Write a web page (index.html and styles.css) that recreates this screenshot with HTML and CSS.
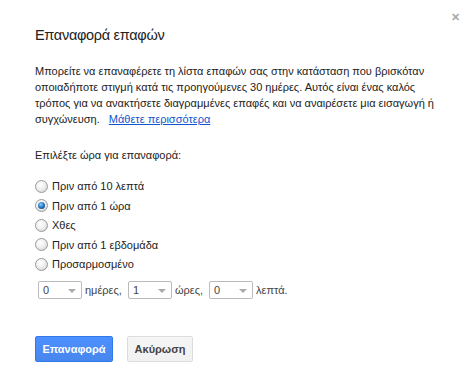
FILE: index.html
```html
<!DOCTYPE html>
<html lang="el">
<head>
  <meta charset="UTF-8" />
  <title>Επαναφορά επαφών</title>
  <link rel="stylesheet" href="styles.css">
</head>
<body>

  <div class="dialog">
    <div class="close">&#x2715;</div>

    <h2>Επαναφορά επαφών</h2>

    <p class="intro">
      Μπορείτε να επαναφέρετε τη λίστα επαφών σας στην κατάσταση που βρισκόταν
      οποιαδήποτε στιγμή κατά τις προηγούμενες 30 ημέρες. Αυτός είναι ένας καλός
      τρόπος για να ανακτήσετε διαγραμμένες επαφές και να αναιρέσετε μια εισαγωγή ή
      συγχώνευση. <a href="#">Μάθετε περισσότερα</a>
    </p>

    <p class="pick">Επιλέξτε ώρα για επαναφορά:</p>

    <div class="options">
      <label><input type="radio" name="when" /> Πριν από 10 λεπτά</label>
      <label><input type="radio" name="when" checked /> Πριν από 1 ώρα</label>
      <label><input type="radio" name="when" /> Χθες</label>
      <label><input type="radio" name="when" /> Πριν από 1 εβδομάδα</label>
      <label><input type="radio" name="when" /> Προσαρμοσμένο</label>
    </div>

    <div class="custom">
      <span class="select"><select><option>0</option></select></span>
      <span class="unit">ημέρες,</span>
      <span class="select"><select><option>1</option></select></span>
      <span class="unit">ώρες,</span>
      <span class="select"><select><option>0</option></select></span>
      <span class="unit">λεπτά.</span>
    </div>

    <div class="buttons">
      <button class="btn primary">Επαναφορά</button>
      <button class="btn">Ακύρωση</button>
    </div>
  </div>

</body>
</html>
```

FILE: styles.css
```css
body {
  margin: 0;
  font-family: "Liberation Sans", Arial, sans-serif;
  font-size: 11px;
  color: #222;
  background: #fff;
}

.dialog {
  position: relative;
  padding: 24px 35px 20px 35px;
}

.close {
  position: absolute;
  top: 11px;
  right: 13px;
  font-size: 11px;
  font-weight: bold;
  color: #aaa;
}

h2 {
  margin: 0;
  font-size: 14.5px;
  letter-spacing: -0.3px;
  font-weight: normal;
  line-height: 22px;
}

.intro {
  margin: 17px 0 0;
  line-height: 16px;
  width: 400px;
}

.intro a {
  color: #15c;
  margin-left: 6px;
}

.pick {
  margin: 20px 0 0;
  line-height: 16px;
}

.options {
  margin-top: 16px;
  display: flex;
  flex-direction: column;
  gap: 5.5px;
}

.options label {
  display: flex;
  align-items: center;
  gap: 4px;
  height: 14px;
  font-size: 11px;
}

.options input {
  appearance: none;
  margin: 0;
  width: 13px;
  height: 13px;
  border-radius: 50%;
  border: 1px solid #9a9a9a;
  background: radial-gradient(circle at 40% 35%, #fff 0%, #f0f0f0 45%, #c8c8c8 100%);
  box-sizing: border-box;
  position: relative;
}

.options input:checked::after {
  content: "";
  position: absolute;
  left: 2px;
  top: 2px;
  width: 7px;
  height: 7px;
  border-radius: 50%;
  background: radial-gradient(circle at 40% 35%, #8fd0ff 0%, #2b7cc4 45%, #0c3d73 100%);
}

.custom {
  margin-top: 10px;
  padding-left: 3px;
  display: flex;
  align-items: center;
  gap: 3px;
}

.unit {
  color: #444;
  margin-right: 3px;
}

.select {
  position: relative;
  display: inline-block;
}

.select select {
  appearance: none;
  display: block;
  width: 44px;
  height: 18px;
  padding: 0 0 0 4px;
  border: 1px solid #bbb;
  border-radius: 2px;
  background: #fff;
  font-family: inherit;
  font-size: 11px;
  color: #444;
}

.select::after {
  content: "";
  position: absolute;
  right: 6px;
  top: 8px;
  border-left: 4px solid transparent;
  border-right: 4px solid transparent;
  border-top: 4px solid #aaa;
  pointer-events: none;
}

.buttons {
  margin-top: 37px;
  display: flex;
  gap: 14px;
}

.btn {
  width: 66px;
  height: 26px;
  padding: 0;
  border: 1px solid #dcdcdc;
  border-radius: 2px;
  background: linear-gradient(#f5f5f5, #f1f1f1);
  font-family: inherit;
  font-size: 11px;
  font-weight: bold;
  color: #444;
}

.btn.primary {
  width: 78px;
  border-color: #3079ed;
  background: linear-gradient(#4d90fe, #4787ed);
  color: #fff;
}
```
